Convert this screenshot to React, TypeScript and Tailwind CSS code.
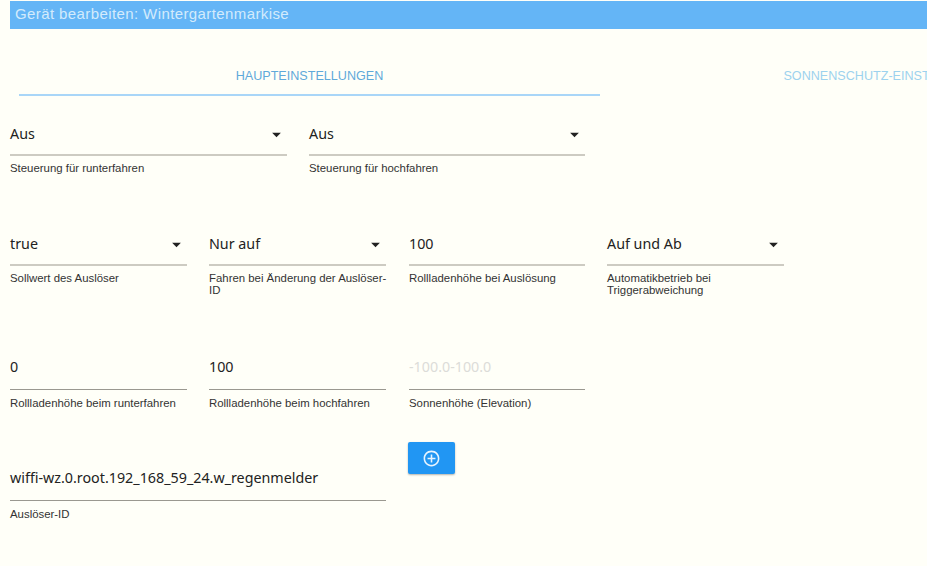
import type { ReactNode } from "react";

const valueFont = "font-['Noto_Sans',sans-serif]";

interface FieldProps {
  value: string;
  label: string;
  width: string;
  select?: boolean;
  placeholder?: boolean;
  soft?: boolean;
}

const ArrowDown = () => (
  <svg viewBox="0 0 24 24" className="w-[21px] h-[21px] fill-[#222222]">
    <path d="M7 10l5 5 5-5z" />
  </svg>
);

const Field = ({ value, label, width, select, placeholder, soft }: FieldProps) => (
  <div className={`${width} pr-[22px] shrink-0`}>
    <div
      className={`h-[38px] flex items-center justify-between ${
        soft ? "pb-[4px] border-b-2 border-[#cdcbc2]" : "pb-[7px] border-b border-[#9a9890]"
      }`}
    >
      <span
        className={`${valueFont} text-[14.3px] ${placeholder ? "text-[#dcdcd8]" : "text-[#222222]"}`}
      >
        {value}
      </span>
      {select && <ArrowDown />}
    </div>
    <p className={`${soft ? "mt-[6px]" : "mt-[7px]"} -mr-[3px] text-[11.4px] leading-[12px] text-[#333333]`}>
      {label}
    </p>
  </div>
);

const Row = ({ children, className }: { children: ReactNode; className?: string }) => (
  <div className={`flex items-start ${className ?? ""}`}>{children}</div>
);

export default function App() {
  return (
    <div className="w-[927px] h-[566px] overflow-hidden bg-[#fffff8] pl-[10px] pt-px font-['Liberation_Sans',Arial,sans-serif]">
      <div className="w-[1194px] h-[28px] bg-[#64b5f6] pl-[5px] pb-[1px] flex items-center text-[15px] tracking-[0.4px] text-[#d3ebfc]">
        Gerät bearbeiten: Wintergartenmarkise
      </div>

      <div className="flex w-[1171px] ml-[9px] h-[68px] pt-[38px] text-[12.6px]">
        <div className="w-[581px] h-[29px] flex justify-center border-b-2 border-[#a9d6f8] text-[#5fa9da]">
          <span>HAUPTEINSTELLUNGEN</span>
        </div>
        <div className="w-[581px] h-[29px] flex justify-center text-[#9dd2ee]">
          <span>SONNENSCHUTZ-EINSTELLUNGEN</span>
        </div>
      </div>

      <Row className="mt-[21px] h-[110px]">
        <Field soft width="w-[299px]" value="Aus" label="Steuerung für runterfahren" select />
        <Field soft width="w-[298px]" value="Aus" label="Steuerung für hochfahren" select />
      </Row>

      <Row className="h-[124px]">
        <Field soft width="w-[199px]" value="true" label="Sollwert des Auslöser" select />
        <Field soft width="w-[199px]" value="Nur auf" label="Fahren bei Änderung der Auslöser-ID" select />
        <Field soft width="w-[199px] pl-px" value="100" label="Rollladenhöhe bei Auslösung" />
        <Field soft width="w-[199px]" value="Auf und Ab" label="Automatikbetrieb bei Triggerabweichung" select />
      </Row>

      <Row className="h-[90px]">
        <Field width="w-[199px]" value="0" label="Rollladenhöhe beim runterfahren" />
        <Field width="w-[199px]" value="100" label="Rollladenhöhe beim hochfahren" />
        <Field width="w-[199px] pl-px" value="-100.0-100.0" label="Sonnenhöhe (Elevation)" placeholder />
      </Row>

      <Row>
        <div className="mt-[21px]">
          <Field width="w-[398px]" value="wiffi-wz.0.root.192_168_59_24.w_regenmelder" label="Auslöser-ID" />
        </div>
        <button className="w-[47px] h-[32px] rounded-[2px] bg-[#2196f3] shadow-[0_1px_2px_rgba(0,0,0,0.3)] flex items-center justify-center">
          <svg viewBox="0 0 24 24" className="w-[19px] h-[19px] fill-[#e8f4fe]">
            <path d="M13 7h-2v4H7v2h4v4h2v-4h4v-2h-4V7zm-1-5C6.48 2 2 6.48 2 12s4.48 10 10 10 10-4.48 10-10S17.52 2 12 2zm0 18c-4.41 0-8-3.59-8-8s3.59-8 8-8 8 3.59 8 8-3.59 8-8 8z" />
          </svg>
        </button>
      </Row>
    </div>
  );
}
